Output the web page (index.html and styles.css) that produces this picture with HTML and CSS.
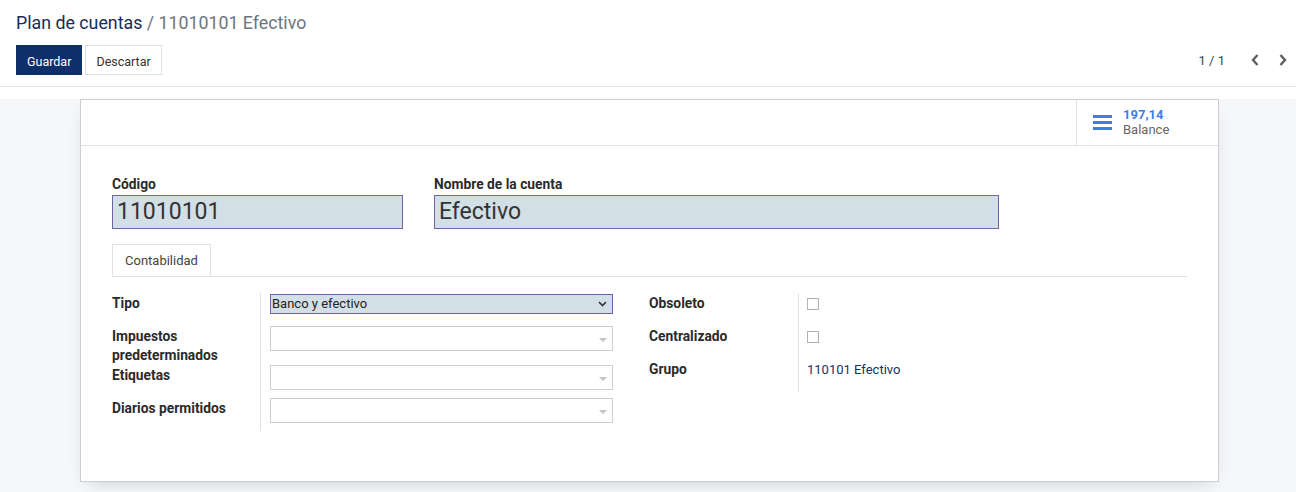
FILE: index.html
```html
<!DOCTYPE html>
<html lang="es">
<head>
<meta charset="utf-8">
<title>Plan de cuentas / 11010101 Efectivo</title>
<link rel="stylesheet" href="styles.css">
</head>
<body>
<div class="control-panel">
  <div class="breadcrumb"><span class="bc-link">Plan de cuentas</span> <span class="bc-active">/ 11010101 Efectivo</span></div>
  <div class="cp-bottom">
    <div class="cp-buttons">
      <button class="btn btn-primary">Guardar</button>
      <button class="btn btn-secondary">Descartar</button>
    </div>
    <div class="pager">
      <span class="pager-value">1 / 1</span>
      <span class="pager-btn"><svg width="8" height="12" viewBox="0 0 8 12"><polyline points="6.5,1 2,6 6.5,11" fill="none" stroke="#5f5f5f" stroke-width="2.4"/></svg></span>
      <span class="pager-btn"><svg width="8" height="12" viewBox="0 0 8 12"><polyline points="1.5,1 6,6 1.5,11" fill="none" stroke="#5f5f5f" stroke-width="2.4"/></svg></span>
    </div>
  </div>
</div>
<div class="statusbar"></div>
<div class="sheet-bg">
  <div class="sheet">
    <div class="button-box">
      <div class="stat-button">
        <svg class="stat-icon" width="19" height="16" viewBox="0 0 19 16"><rect x="0" y="0" width="19" height="3" fill="#3f7ee3"/><rect x="0" y="6" width="19" height="3" fill="#3f7ee3"/><rect x="0" y="12" width="19" height="3" fill="#3f7ee3"/></svg>
        <div class="stat-info">
          <span class="stat-value">197,14</span>
          <span class="stat-text">Balance</span>
        </div>
      </div>
    </div>
    <div class="sheet-content">
      <div class="title-fields">
        <div class="title-field code">
          <label class="title-label">Código</label>
          <div class="big-input">11010101</div>
        </div>
        <div class="title-field name">
          <label class="title-label">Nombre de la cuenta</label>
          <div class="big-input">Efectivo</div>
        </div>
      </div>
      <div class="tabs">
        <div class="tab active">Contabilidad</div>
      </div>
      <div class="group">
        <div class="col col-left">
          <div class="row">
            <div class="lbl">Tipo</div>
            <div class="fld">
              <div class="select">Banco y efectivo
                <svg class="chev" width="9" height="6" viewBox="0 0 9 6"><polyline points="1,1 4.5,4.5 8,1" fill="none" stroke="#333" stroke-width="1.6"/></svg>
              </div>
            </div>
          </div>
          <div class="row">
            <div class="lbl">Impuestos predeterminados</div>
            <div class="fld"><div class="m2o"><span class="caret"></span></div></div>
          </div>
          <div class="row">
            <div class="lbl">Etiquetas</div>
            <div class="fld"><div class="m2o"><span class="caret"></span></div></div>
          </div>
          <div class="row">
            <div class="lbl">Diarios permitidos</div>
            <div class="fld"><div class="m2o"><span class="caret"></span></div></div>
          </div>
        </div>
        <div class="col col-right">
          <div class="row">
            <div class="lbl">Obsoleto</div>
            <div class="fld"><span class="checkbox"></span></div>
          </div>
          <div class="row">
            <div class="lbl">Centralizado</div>
            <div class="fld"><span class="checkbox"></span></div>
          </div>
          <div class="row">
            <div class="lbl">Grupo</div>
            <div class="fld"><span class="link">110101 Efectivo</span></div>
          </div>
        </div>
      </div>
    </div>
  </div>
</div>
</body>
</html>
```
FILE: styles.css
```css
* { box-sizing: border-box; }
html, body { margin: 0; padding: 0; }
body {
  font-family: Roboto, "Liberation Sans", sans-serif;
  font-size: 13px;
  color: #4c4c4c;
  background: #fff;
  height: 492px;
  overflow: hidden;
}
.control-panel {
  height: 87px;
  border-bottom: 1px solid #dee2e6;
  padding: 12px 9px 0 16px;
}
.breadcrumb {
  font-size: 17.8px;
  line-height: 22px;
  white-space: nowrap;
}
.bc-link { color: #1b2b55; }
.bc-active { color: #6c757d; }
.cp-bottom {
  margin-top: 11px;
  display: flex;
  justify-content: space-between;
  align-items: center;
  height: 30px;
}
.cp-buttons { display: flex; gap: 3px; }
.btn {
  font-family: Roboto, "Liberation Sans", sans-serif;
  font-size: 12.5px;
  height: 30px;
  padding: 0 10px;
  border: 1px solid transparent;
  border-radius: 0;
  line-height: 29px;
  padding-top: 1px;
}
.btn-primary { background: #0f2f6b; color: #fff; border-color: #0f2f6b; }
.btn-secondary { background: #fff; color: #333; border-color: #dee2e6; }
.pager { display: flex; align-items: center; color: #444; }
.pager-value { margin-right: 26px; }
.pager-btn { display: flex; width: 8px; height: 12px; }
.pager-btn + .pager-btn { margin-left: 20px; }
.statusbar { height: 12px; background: #fff; }
.sheet-bg {
  background: #f6f7f9;
  height: 393px;
}
.sheet {
  margin-left: 80px;
  width: 1139px;
  height: 383px;
  background: #fff;
  border: 1px solid #cdcfd2;
  box-shadow: 0 6px 18px -8px rgba(0,0,0,0.22);
}
.button-box {
  height: 46px;
  border-bottom: 1px solid #dee2e6;
  display: flex;
  justify-content: flex-end;
}
.stat-button {
  width: 142px;
  height: 45px;
  border-left: 1px solid #dee2e6;
  display: flex;
  align-items: center;
  padding-left: 16px;
}
.stat-icon { margin-top: 1px; }
.stat-info {
  display: flex;
  flex-direction: column;
  margin-left: 11px;
  line-height: 15px;
  margin-top: -1px;
}
.stat-value { color: #3f7ee3; font-weight: 700; }
.stat-text { color: #666; }
.sheet-content {
  padding: 28px 31px 0 31px;
}
.title-fields { display: flex; gap: 31px; }
.title-field.code { width: 291px; }
.title-field.name { width: 565px; }
.title-label {
  display: block;
  font-weight: 700;
  font-size: 13.8px;
  color: #2b2b2b;
  line-height: 19px;
  padding-top: 1px;
  margin-bottom: 1px;
}
.big-input {
  height: 34px;
  background: #d2dfe6;
  border: 1px solid #7162a7;
  font-size: 23px;
  line-height: 32px;
  color: #333;
  padding-left: 4px;
}
.tabs {
  margin-top: 15px;
  border-bottom: 1px solid #dee2e6;
  display: flex;
}
.tab {
  height: 32px;
  padding: 0 12px;
  border: 1px solid #dee2e6;
  border-bottom: none;
  line-height: 31px;
  color: #444;
}
.group {
  margin-top: 16px;
  display: flex;
}
.col-left { width: 537px; }
.col-right { flex: 1; }
.row { display: flex; }
.lbl {
  font-weight: 700;
  font-size: 13.8px;
  color: #2b2b2b;
  line-height: 19px;
  padding-top: 1px;
  padding-right: 10px;
  border-right: 1px solid #dee2e6;
}
.col-left .lbl { width: 149px; }
.col-right .lbl { width: 150px; }
.fld {
  padding-bottom: 8px;
  min-height: 33px;
  line-height: 19px;
}
.col-left .fld { padding-left: 9px; }
.col-right .fld { padding-left: 8px; }
.select {
  position: relative;
  width: 343px;
  height: 20px;
  margin-top: 1px;
  background: #d2dfe6;
  border: 1px solid #7162a7;
  color: #222;
  line-height: 18px;
  padding-left: 1px;
}
.chev { position: absolute; right: 5px; top: 6px; }
.m2o {
  position: relative;
  width: 343px;
  height: 25px;
  border: 1px solid #cfcfcf;
  background: #fff;
}
.caret {
  position: absolute;
  right: 5px;
  top: 11px;
  width: 0;
  height: 0;
  border-left: 4px solid transparent;
  border-right: 4px solid transparent;
  border-top: 4px solid #c4c4c4;
}
.checkbox {
  display: inline-block;
  width: 12px;
  height: 12px;
  border: 1px solid #aeb3b8;
  background: #fff;
  margin-top: 5px;
  vertical-align: top;
}
.link { color: #1a3068; padding-top: 1px; display: inline-block; }
```
